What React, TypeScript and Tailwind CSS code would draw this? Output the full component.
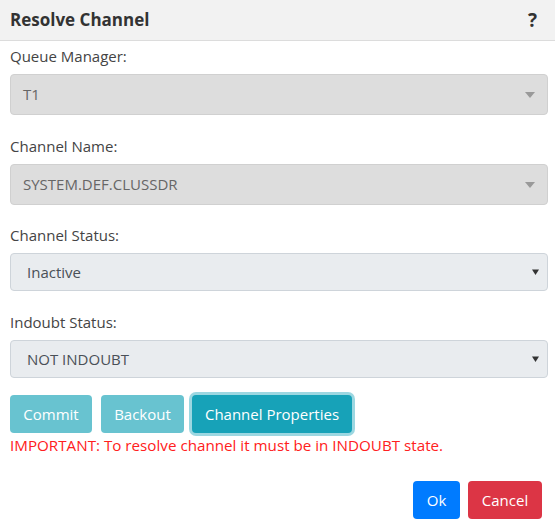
import React from "react";

const font = { fontFamily: '"Open Sans", "Noto Sans", sans-serif' };

function Caret({ className }: { className: string }) {
  return (
    <svg width="10" height="6" viewBox="0 0 10 6" className={className}>
      <path d="M0 0h10L5 6z" fill="currentColor" />
    </svg>
  );
}

function DisabledSelect({ value }: { value: string }) {
  return (
    <div className="flex h-[41px] items-center justify-between rounded-[4px] border border-[#d0d0d0] bg-[#dddddd] pl-[12px] pr-[12px] text-[15px] text-[#666]">
      <span>{value}</span>
      <Caret className="text-[#999]" />
    </div>
  );
}

function NativeSelect({ value }: { value: string }) {
  return (
    <div className="flex h-[38px] items-center justify-between rounded-[4px] border border-[#ced4da] bg-[#e9ecef] pl-[16px] pr-[8px] text-[15px] text-[#495057]">
      <span>{value}</span>
      <svg width="7" height="6" viewBox="0 0 7 6" className="text-[#333]">
        <path d="M0 0.5h7L3.5 6z" fill="currentColor" />
      </svg>
    </div>
  );
}

function Field({ label, children, mb }: { label: string; children: React.ReactNode; mb: string }) {
  return (
    <div className={mb}>
      <div className="mb-[7px] text-[15px] leading-[22px] text-[#444]">{label}</div>
      {children}
    </div>
  );
}

export default function App() {
  return (
    <div className="h-[527px] w-[555px] bg-white" style={font}>
      <header className="flex h-[41px] items-center justify-between border-b border-[#dcdcdc] bg-[#f2f2f2] pl-[10px] pr-[18px]">
        <h1 className="text-[17px] font-bold text-[#333]">Resolve Channel</h1>
        <span className="text-[19px] font-bold text-[#333]">?</span>
      </header>

      <div className="px-[10px] pt-[4px] pr-[7px]">
        <Field label="Queue Manager:" mb="mb-[20px]">
          <DisabledSelect value="T1" />
        </Field>
        <Field label="Channel Name:" mb="mb-[19px]">
          <DisabledSelect value="SYSTEM.DEF.CLUSSDR" />
        </Field>
        <Field label="Channel Status:" mb="mb-[20px]">
          <NativeSelect value="Inactive" />
        </Field>
        <Field label="Indoubt Status:" mb="mb-[17px]">
          <NativeSelect value="NOT INDOUBT" />
        </Field>

        <div className="flex items-center gap-[9px] text-[15px] text-white">
          <button className="h-[38px] w-[82px] rounded-[4px] bg-[#68c3d0]">Commit</button>
          <button className="h-[38px] w-[83px] rounded-[4px] bg-[#68c3d0]">Backout</button>
          <button className="ml-[-1px] h-[38px] w-[160px] rounded-[4px] bg-[#17a2b8] shadow-[0_0_0_3px_rgba(58,176,195,0.5)]">
            Channel Properties
          </button>
        </div>
        <p className="mt-[1px] text-[15.2px] leading-[22px] text-[#ff2020]">
          IMPORTANT: To resolve channel it must be in INDOUBT state.
        </p>

        <div className="mt-[25px] flex justify-end gap-[8px] pr-[6px] text-[15px] text-white">
          <button className="h-[38px] w-[47px] rounded-[4px] bg-[#007bff]">Ok</button>
          <button className="h-[38px] w-[74px] rounded-[4px] bg-[#dc3545]">Cancel</button>
        </div>
      </div>
    </div>
  );
}
